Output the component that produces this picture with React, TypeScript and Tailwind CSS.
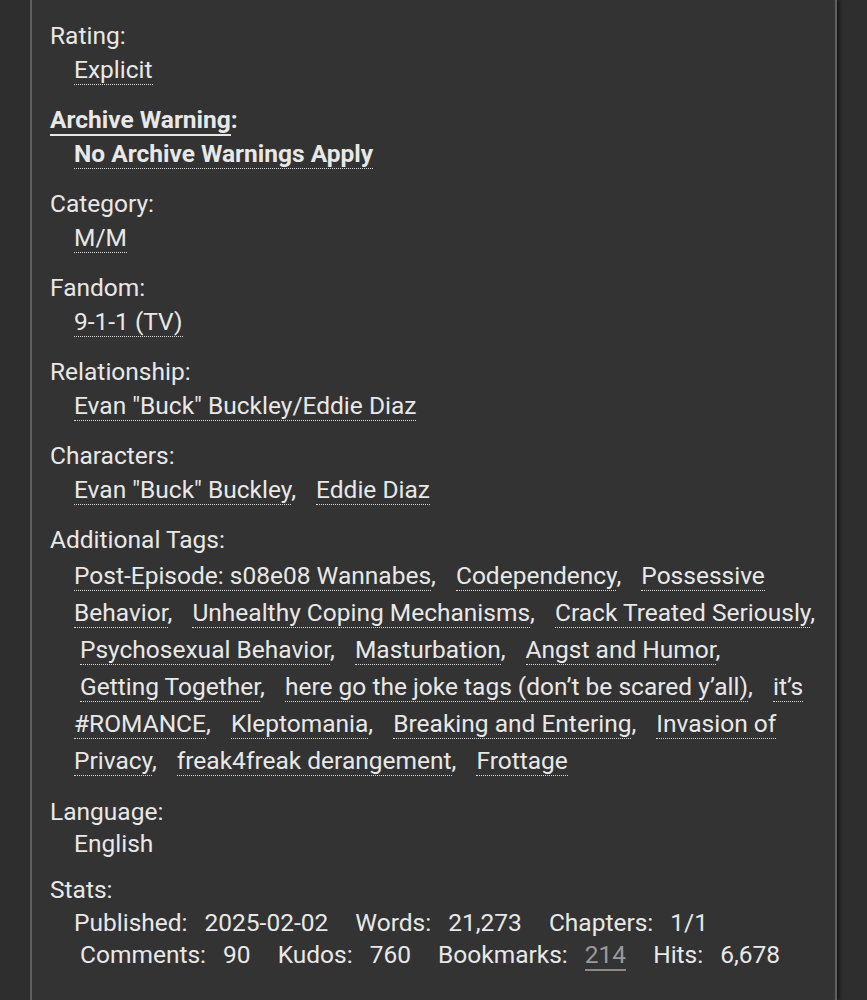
import React from "react";

const tag = "border-b border-dotted border-[#d8d8d8]";

function Tags({ items }: { items: string[] }) {
  return (
    <>
      {items.map((t, i) => (
        <React.Fragment key={i}>
          <span className={i === 0 ? "" : "pl-[6px]"}>
            <a className={tag}>{t}</a>
            {i < items.length - 1 ? "," : null}
          </span>
          {i < items.length - 1 ? <span className="[word-spacing:8px]"> </span> : null}
        </React.Fragment>
      ))}
    </>
  );
}

function Row({ label, children, bold, tagsLeading }: { label: React.ReactNode; children: React.ReactNode; bold?: boolean; tagsLeading?: boolean }) {
  return (
    <div className="mb-[16px]">
      <div className={`leading-[34px] ${bold ? "font-bold" : ""}`}>{label}</div>
      <div className={`pl-[24px] ${tagsLeading ? "leading-[37px]" : "leading-[34px]"} ${bold ? "font-bold" : ""}`}>{children}</div>
    </div>
  );
}

function Stat({ k, v, first, last }: { k: string; v: React.ReactNode; first?: boolean; last?: boolean }) {
  return (
    <>
      <span className={`whitespace-nowrap ${first ? "" : "pl-[6px]"} ${last ? "" : "pr-[15px]"}`}>
        <span>{k}</span>
        <span className="ml-[17px]">{v}</span>
      </span>{" "}
    </>
  );
}

export default function App() {
  return (
    <div className="min-h-screen w-full bg-[#2e2e2e] text-[#e8e8e8] text-[24.5px]" style={{ fontFamily: "Roboto, 'Noto Sans', sans-serif" }}>
      <div className="ml-[30px] w-[807px] min-h-[1000px] bg-[#333333] border-l-2 border-r-2 border-[#5e5e5e] shadow-[3px_0_3px_rgba(0,0,0,0.45)] pl-[18px] pr-[18px] pt-[19px]">
        <Row label="Rating:">
          <Tags items={["Explicit"]} />
        </Row>
        <Row bold label={<><span className="border-b-2 border-[#e8e8e8]">Archive Warning</span>:</>}>
          <Tags items={["No Archive Warnings Apply"]} />
        </Row>
        <Row label="Category:">
          <Tags items={["M/M"]} />
        </Row>
        <Row label="Fandom:">
          <Tags items={["9-1-1 (TV)"]} />
        </Row>
        <Row label="Relationship:">
          <Tags items={['Evan "Buck" Buckley/Eddie Diaz']} />
        </Row>
        <Row label="Characters:">
          <Tags items={['Evan "Buck" Buckley', "Eddie Diaz"]} />
        </Row>
        <Row label="Additional Tags:" tagsLeading>
          <Tags
            items={[
              "Post-Episode: s08e08 Wannabes",
              "Codependency",
              "Possessive Behavior",
              "Unhealthy Coping Mechanisms",
              "Crack Treated Seriously",
              "Psychosexual Behavior",
              "Masturbation",
              "Angst and Humor",
              "Getting Together",
              "here go the joke tags (don\u2019t be scared y\u2019all)",
              "it\u2019s #ROMANCE",
              "Kleptomania",
              "Breaking and Entering",
              "Invasion of Privacy",
              "freak4freak derangement",
              "Frottage",
            ]}
          />
        </Row>
        <div className="mb-[14px]">
          <div className="leading-[34px]">Language:</div>
          <div className="pl-[24px] leading-[30px]">English</div>
        </div>
        <div>
          <div className="leading-[34px]">Stats:</div>
          <div className="pl-[24px] leading-[32px]">
            <Stat first k="Published:" v="2025-02-02" />
            <Stat k="Words:" v="21,273" />
            <Stat k="Chapters:" v="1/1" />
            <Stat k="Comments:" v="90" />
            <Stat k="Kudos:" v="760" />
            <Stat k="Bookmarks:" v={<a className="text-[#9a9a9a] border-b-2 border-[#8a8a8a]">214</a>} />
            <Stat last k="Hits:" v="6,678" />
          </div>
        </div>
      </div>
    </div>
  );
}
